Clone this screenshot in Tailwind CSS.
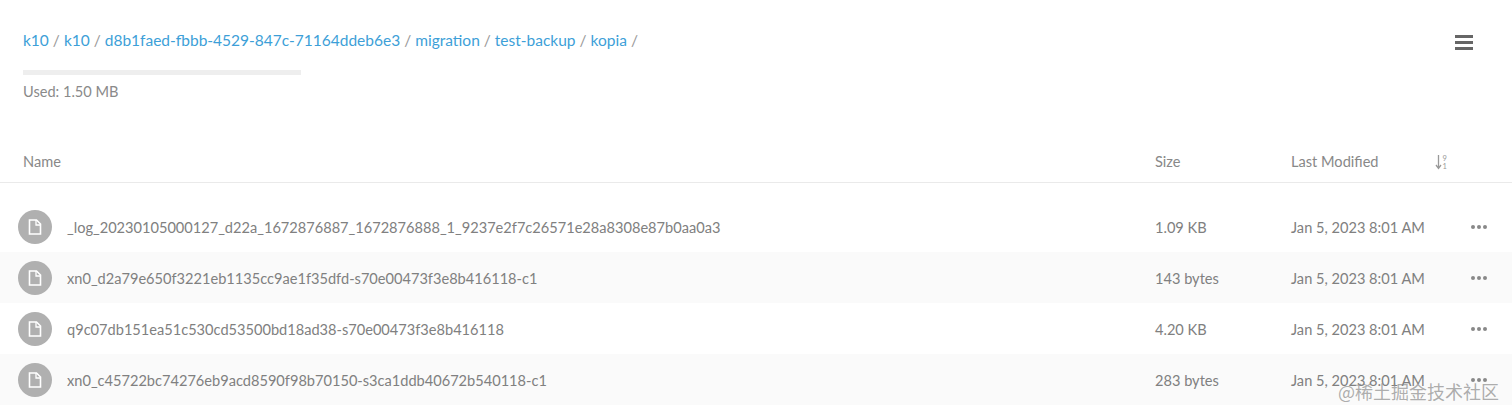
<!DOCTYPE html>
<html lang="en">
<head>
    <meta charset="UTF-8">
    <title>kopia</title>
    <script src="https://cdn.jsdelivr.net/npm/@tailwindcss/browser@4"></script>
</head>
<body class="bg-white font-['Lato',sans-serif] text-[#808080] overflow-hidden">
    <div class="relative h-[414px] w-[1512px] overflow-hidden">
        <!-- Breadcrumb -->
        <header class="flex justify-between pl-[23px] pr-[39px] pt-[30px]">
            <div>
                <nav class="flex gap-[4px] text-[15.500px] leading-[20px] text-[#999]">
                    <a class="text-[#3d9fd8]">k10</a><span>/</span>
                    <a class="text-[#3d9fd8]">k10</a><span>/</span>
                    <a class="text-[#3d9fd8]">d8b1faed-fbbb-4529-847c-71164ddeb6e3</a><span>/</span>
                    <a class="text-[#3d9fd8]">migration</a><span>/</span>
                    <a class="text-[#3d9fd8]">test-backup</a><span>/</span>
                    <a class="text-[#3d9fd8]">kopia</a><span>/</span>
                </nav>
                <div class="mt-[20px] h-[5px] w-[278px] bg-[#eeeeee]"></div>
                <p class="mt-[8px] text-[14.600px] leading-[18px] text-[#8a8a8a]">Used: 1.50 MB</p>
            </div>
            <div class="mt-[5px] flex h-[15px] w-[18px] flex-col justify-between">
                <span class="h-[3px] bg-[#666]"></span>
                <span class="h-[3px] bg-[#666]"></span>
                <span class="h-[3px] bg-[#666]"></span>
            </div>
        </header>

        <!-- Table head -->
        <div class="mt-[40px] flex h-[42px] items-center border-b border-[#eaeaea] pl-[23px] text-[14.600px] text-[#888]">
            <span class="w-[1132px]">Name</span>
            <span class="w-[136px]">Size</span>
            <span class="w-[144px]">Last Modified</span>
            <svg width="14" height="16" viewBox="0 0 14 16" class="text-[#999]">
                <path d="M3.500 1v13M1 11l2.500 3.500L6 11" fill="none" stroke="currentColor" stroke-width="1.300"/>
                <text x="7.500" y="6.500" font-size="7.500" fill="currentColor">9</text>
                <text x="7.500" y="14.500" font-size="7.500" fill="currentColor">1</text>
            </svg>
        </div>

        <!-- Rows -->
        <div class="mt-[18px] text-[14.600px]">
            <div class="flex h-[51px] items-center pl-[18px]">
                <span class="flex size-[34px] items-center justify-center rounded-full bg-[#b0b0b0]">
                    <svg width="14" height="16" viewBox="0 0 14 16"><path d="M1.500 1h7l4 4v10h-11z" fill="none" stroke="#fff" stroke-width="1.600"/><path d="M8 1v5h5" fill="none" stroke="#fff" stroke-width="1.300"/></svg>
                </span>
                <span class="ml-[15px] mt-[2px] w-[1088px]">_log_20230105000127_d22a_1672876887_1672876888_1_9237e2f7c26571e28a8308e87b0aa0a3</span>
                <span class="mt-[2px] w-[136px]">1.09 KB</span>
                <span class="mt-[2px] w-[180px]">Jan 5, 2023 8:01 AM</span>
                <span class="flex gap-[2px]"><i class="size-[4px] rounded-full bg-[#888]"></i><i class="size-[4px] rounded-full bg-[#888]"></i><i class="size-[4px] rounded-full bg-[#888]"></i></span>
            </div>
            <div class="flex h-[51px] items-center bg-[#fafafa] pl-[18px]">
                <span class="flex size-[34px] items-center justify-center rounded-full bg-[#b0b0b0]">
                    <svg width="14" height="16" viewBox="0 0 14 16"><path d="M1.500 1h7l4 4v10h-11z" fill="none" stroke="#fff" stroke-width="1.600"/><path d="M8 1v5h5" fill="none" stroke="#fff" stroke-width="1.300"/></svg>
                </span>
                <span class="ml-[15px] mt-[2px] w-[1088px]">xn0_d2a79e650f3221eb1135cc9ae1f35dfd-s70e00473f3e8b416118-c1</span>
                <span class="mt-[2px] w-[136px]">143 bytes</span>
                <span class="mt-[2px] w-[180px]">Jan 5, 2023 8:01 AM</span>
                <span class="flex gap-[2px]"><i class="size-[4px] rounded-full bg-[#888]"></i><i class="size-[4px] rounded-full bg-[#888]"></i><i class="size-[4px] rounded-full bg-[#888]"></i></span>
            </div>
            <div class="flex h-[51px] items-center pl-[18px]">
                <span class="flex size-[34px] items-center justify-center rounded-full bg-[#b0b0b0]">
                    <svg width="14" height="16" viewBox="0 0 14 16"><path d="M1.500 1h7l4 4v10h-11z" fill="none" stroke="#fff" stroke-width="1.600"/><path d="M8 1v5h5" fill="none" stroke="#fff" stroke-width="1.300"/></svg>
                </span>
                <span class="ml-[15px] mt-[2px] w-[1088px]">q9c07db151ea51c530cd53500bd18ad38-s70e00473f3e8b416118</span>
                <span class="mt-[2px] w-[136px]">4.20 KB</span>
                <span class="mt-[2px] w-[180px]">Jan 5, 2023 8:01 AM</span>
                <span class="flex gap-[2px]"><i class="size-[4px] rounded-full bg-[#888]"></i><i class="size-[4px] rounded-full bg-[#888]"></i><i class="size-[4px] rounded-full bg-[#888]"></i></span>
            </div>
            <div class="flex h-[51px] items-center bg-[#fafafa] pl-[18px]">
                <span class="flex size-[34px] items-center justify-center rounded-full bg-[#b0b0b0]">
                    <svg width="14" height="16" viewBox="0 0 14 16"><path d="M1.500 1h7l4 4v10h-11z" fill="none" stroke="#fff" stroke-width="1.600"/><path d="M8 1v5h5" fill="none" stroke="#fff" stroke-width="1.300"/></svg>
                </span>
                <span class="ml-[15px] mt-[2px] w-[1088px]">xn0_c45722bc74276eb9acd8590f98b70150-s3ca1ddb40672b540118-c1</span>
                <span class="mt-[2px] w-[136px]">283 bytes</span>
                <span class="mt-[2px] w-[180px]">Jan 5, 2023 8:01 AM</span>
                <span class="flex gap-[2px]"><i class="size-[4px] rounded-full bg-[#888]"></i><i class="size-[4px] rounded-full bg-[#888]"></i><i class="size-[4px] rounded-full bg-[#888]"></i></span>
            </div>
        </div>

        <!-- Watermark -->
        <span class="absolute left-[1338px] top-[379px] font-['Noto_Sans_CJK_SC',sans-serif] text-[18px] leading-[24px] text-[#8a8a8a]/70">@稀土掘金技术社区</span>
    </div>
</body>
</html>
